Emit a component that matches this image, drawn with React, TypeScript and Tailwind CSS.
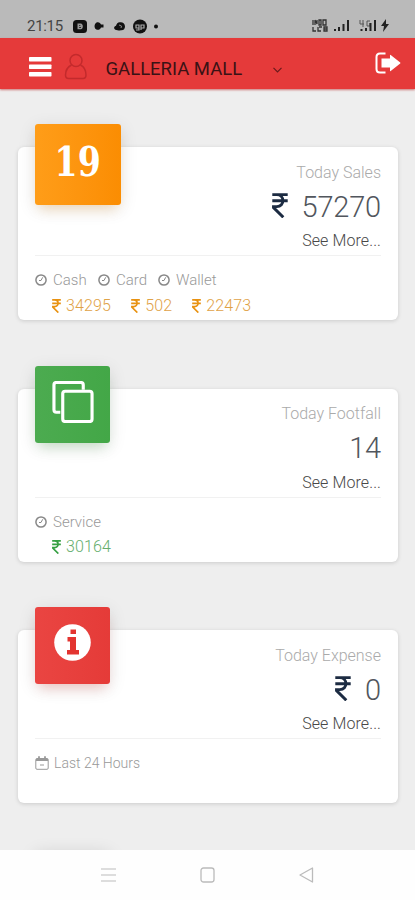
import type { ReactNode } from "react";

const roboto = "font-['Roboto','Noto_Sans',sans-serif]";

function Rupee({ className }: { className: string }) {
  return (
    <svg viewBox="0 0 16 25" preserveAspectRatio="none" fill="none" stroke="currentColor" strokeWidth="2.900" className={`shrink-0 ${className}`}>
      <path d="M.3 1.600h15.400M.3 7.800h15.400M.3 1.600h4.500c8 0 8.200 12 0 12H1.500v1l9.800 9.700" />
    </svg>
  );
}

function Clock() {
  return (
    <svg width="12" height="12" viewBox="0 0 12 12" fill="none" stroke="#888" className="shrink-0">
      <circle cx="6" cy="6" r="5.100" strokeWidth="1.500" />
      <path d="M7.700 3.300 6 6.500H4" strokeWidth="1" />
    </svg>
  );
}

function StatusBar() {
  return (
    <div className="flex h-[38px] items-end bg-[#bababa] pr-[25px] pl-[27px] text-[#444]">
      <span className="mb-[3px] w-[36px] text-[15px] leading-[18px] whitespace-nowrap tracking-[-0.3px]">21:15</span>
      <svg width="90" height="16" viewBox="0 0 90 16" className="mb-[4px] ml-[9px]" fill="#111">
        <rect x="1" y="2" width="14" height="13" rx="3.5" />
        <path d="M5.5 5.5h3.2c2.8 0 2.8 5.8 0 5.8H5.5z" fill="#999" />
        <path d="M7.3 7h1v1h-1zm0 2h1.5v1H7.3z" />
        <path d="M24.500 4.500c2-1 4 .2 4.500 2h2.500v3h-2.500c-.7 2-3 3-5 1.800-2-1.500-2-5.300.5-6.800z" />
        <path d="M42.500 11c-1-1.500 0-3 1.500-3.300.5-2 2-3.700 4-3.500 2.500-.4 4.700 1 5 4 .1 2.500-1.500 4.300-4 4-2.500.500-5 .300-6.500-1.200z" />
        <path d="m47 7 2.500 1-.5 2" fill="none" stroke="#888" />
        <circle cx="68" cy="8.500" r="7" />
        <path d="M64 7h3v3h-3zm5 0h3v3h-3zm-2 0v5h-3m5-5v5" fill="none" stroke="#aaa" strokeWidth="1.200" />
        <circle cx="84" cy="8.500" r="2" />
      </svg>
      <svg width="78" height="14" viewBox="0 0 78 14" className="mb-[5px] ml-auto" fill="#222">
        <path d="M1 1v5m2-5v5m0-5 2 4V1m2 0h2v5H7zM11 1h3v5h-3zM1 8v4h3m2-4v4h3M7 8h3m2 0h3v4h-3zm0 2h3" fill="none" stroke="#333" strokeWidth="1.300" />
        <path d="M22 10h2v2h-2zM26 8h2v4h-2zM30.500 5h2v7h-2zM35 1h2v11h-2z" />
        <path d="M48 1v4h4m-1-4v7m7-6h-3v5h3V4" fill="none" stroke="#555" />
        <path d="M48.500 10h2v2h-2zM53 9h2v3h-2zM57.500 4h2v8h-2zM62 1h2v11h-2zM74 0l-5 7h3l-1 6 6-8h-3z" />
      </svg>
    </div>
  );
}

function Header() {
  return (
    <header className="flex h-[51px] items-start bg-[#e53a3a] pr-[14px] pl-[29px] shadow-[0_1px_2px_#c77]">
      <svg width="23" height="20" viewBox="0 0 23 20" fill="white" className="mt-[18.500px]">
        <rect width="22.500" height="4.500" rx=".7" />
        <rect y="7.500" width="22.500" height="4.500" rx=".7" />
        <rect y="15" width="22.500" height="4.500" rx=".7" />
      </svg>
      <svg width="24" height="27" viewBox="0 0 24 27" fill="none" stroke="#c32a2c" strokeWidth="1.500" className="mt-[15px] ml-[12px]">
        <circle cx="12" cy="7.500" r="6" />
        <path d="M7.500 12C3.500 14 1.500 17.500 1.500 22c0 2 1 3.500 3 3.500h14.500c2 0 3-1.500 3-3.500 0-4.500-1.500-8-5.500-10" />
      </svg>
      <span className="mt-[19px] ml-[17.500px] w-[137px] text-[18.500px] leading-[25px] whitespace-nowrap text-[#3a1215]">GALLERIA MALL</span>
      <svg width="9" height="6" viewBox="0 0 9 6" fill="none" stroke="#6b1a1c" strokeWidth="1.200" className="mt-[28.500px] ml-[30px]">
        <path d="m.5.8 4 4 4-4" />
      </svg>
      <svg width="26" height="22" viewBox="0 0 26 22" fill="white" className="mt-[14px] ml-auto">
        <path d="M10.500 1.500H5Q1.500 1.500 1.500 5v12Q1.500 20.500 5 20.500h5.500" fill="none" stroke="white" strokeWidth="2" />
        <path d="M6.500 6.500H15V3.300Q15 2.500 15.700 3l9.500 7.500q.5.500 0 1l-9.500 7.500Q15 19.500 15 18.700V15.500H6.500z" />
      </svg>
    </header>
  );
}

interface CardProps {
  tile: ReactNode;
  tileClass: string;
  title: string;
  value: string;
  rupee?: boolean;
  children: ReactNode;
}

function StatCard({ tile, tileClass, title, value, rupee, children }: CardProps) {
  return (
    <section className="h-[173px] shrink-0 rounded-[6px] bg-white px-[17px] shadow-[0_1px_4px_rgba(0,0,0,0.15)]">
      <div className="flex h-[109px] justify-between border-b border-[#f1f1f1]">
        <div className={`-mt-[23px] flex justify-center rounded-[3px] ${tileClass}`}>{tile}</div>
        <div className="flex flex-col items-end font-light">
          <span className="mt-[15.500px] text-[16px] leading-[20px] text-[#aaa]">{title}</span>
          <div className="mt-[7px] flex h-[36px] items-center text-[29px] tracking-[-0.200px] text-[#51565d]">
            {rupee && <Rupee className="mr-[14px] mb-[5px] h-[25px] w-[16px] text-[#1c2b42]" />}
            <span>{value}</span>
          </div>
          <span className="mt-[5.500px] text-[16px] leading-[20px] tracking-[0.1px] text-[#484848]">See More...</span>
        </div>
      </div>
      {children}
    </section>
  );
}

function Amount({ value, className }: { value: string; className: string }) {
  return (
    <span className="flex items-center gap-[5px]">
      <Rupee className={`mb-[1px] h-[14px] w-[9px] ${className}`} />
      <span>{value}</span>
    </span>
  );
}

export default function App() {
  return (
    <div className={`flex h-[900px] w-[415px] flex-col overflow-hidden bg-[#eee] ${roboto}`}>
      <StatusBar />
      <Header />
      <main className="flex h-[761px] flex-col gap-[68.500px] overflow-hidden pt-[58px] pr-[17px] pl-[18px]">
        <StatCard
          title="Today Sales"
          value="57270"
          rupee
          tileClass="h-[81px] w-[86px] bg-linear-to-r from-[#ff9d18] to-[#fb8d02] shadow-[0_8px_12px_-5px_rgba(251,150,20,.25),0_4px_18px_rgba(0,0,0,.11)]"
          tile={<span className="mt-[15px] scale-x-[.9] font-['DejaVu_Serif_Condensed','DejaVu_Serif',serif] text-[41px] leading-[46px] font-bold text-white">19</span>}
        >
          <div className="mt-[14px] flex items-center text-[15px] leading-[20px] font-light text-[#999]">
            <Clock /><span className="ml-[6px] w-[45px]">Cash</span>
            <Clock /><span className="ml-[6px] w-[42px]">Card</span>
            <Clock /><span className="ml-[6px]">Wallet</span>
          </div>
          <div className="mt-[6px] ml-[17px] flex gap-[20px] text-[16px] leading-[20px] font-light tracking-[0.150px] text-[#dfa247]">
            <Amount value="34295" className="text-[#e89211]" />
            <Amount value="502" className="text-[#e89211]" />
            <Amount value="22473" className="text-[#e89211]" />
          </div>
        </StatCard>
        <StatCard
          title="Today Footfall"
          value="14"
          tileClass="h-[77px] w-[75px] bg-linear-to-r from-[#4cab50] to-[#43a747] shadow-[0_8px_12px_-5px_rgba(76,175,80,.25),0_4px_18px_rgba(0,0,0,.11)]"
          tile={
            <svg width="42" height="42" viewBox="0 0 42 43" fill="none" stroke="white" strokeWidth="3.200" className="mt-[15px]">
              <path d="M8 32H4Q1.500 32 1.500 29.500V4Q1.500 1.500 4 1.500h25Q31.500 1.500 31.500 4v5" />
              <rect x="10.500" y="10.500" width="30" height="31" rx="2.500" />
            </svg>
          }
        >
          <div className="mt-[14px] flex items-center gap-[6px] text-[15px] leading-[20px] font-light text-[#999]">
            <Clock /><span>Service</span>
          </div>
          <div className="mt-[5.500px] ml-[17px] flex text-[16px] leading-[20px] font-light tracking-[0.150px] text-[#66ae6d]">
            <Amount value="30164" className="text-[#36a043]" />
          </div>
        </StatCard>
        <StatCard
          title="Today Expense"
          value="0"
          rupee
          tileClass="h-[77px] w-[75px] bg-linear-to-r from-[#ea4542] to-[#e53b38] shadow-[0_8px_12px_-5px_rgba(244,67,54,.25),0_4px_18px_rgba(0,0,0,.11)]"
          tile={
            <svg width="37" height="37" viewBox="0 0 37 37" fill="#e33430" className="mt-[17px]">
              <circle cx="18.500" cy="18.500" r="18.300" fill="white" />
              <path d="M16.500 5.500h5.500v4.500h-5.500zM13.500 13h8.500v13h3v4.500H13v-4.500h3v-8.500h-2.500z" />
            </svg>
          }
        >
          <div className="mt-[14px] flex items-center gap-[5px] text-[14px] leading-[20px] font-light text-[#999]">
            <svg width="14" height="14" viewBox="0 0 14 14" fill="none" stroke="#999" className="shrink-0">
              <rect x=".8" y="2.500" width="12.400" height="10.800" rx="1.200" />
              <path d="M1 4h12M4 .3V3M10 .3V3" strokeWidth="1.800" />
              <path d="M5 9h4" />
            </svg>
            <span>Last 24 Hours</span>
          </div>
        </StatCard>
        <div className="-mt-[22px] ml-[17px] h-[77px] w-[75px] shrink-0 rounded-[3px] shadow-[0_4px_18px_rgba(0,0,0,.14)]" />
      </main>
      <nav className="flex h-[50px] items-center bg-[#fefefe] pl-[101px]">
        <svg width="15" height="14" viewBox="0 0 15 14" fill="none" stroke="#bbb" strokeWidth="1.200">
          <path d="M0 1h15M0 7h15M0 13h15" />
        </svg>
        <svg width="15" height="16" viewBox="0 0 15 16" fill="none" stroke="#bbb" strokeWidth="1.300" className="ml-[84px]">
          <rect x="1" y="1" width="13" height="14" rx="2.500" />
        </svg>
        <svg width="15" height="16" viewBox="0 0 15 16" fill="none" stroke="#bbb" strokeWidth="1.300" strokeLinejoin="round" className="ml-[84px]">
          <path d="M13.500 1v14L1 8z" />
        </svg>
      </nav>
    </div>
  );
}
